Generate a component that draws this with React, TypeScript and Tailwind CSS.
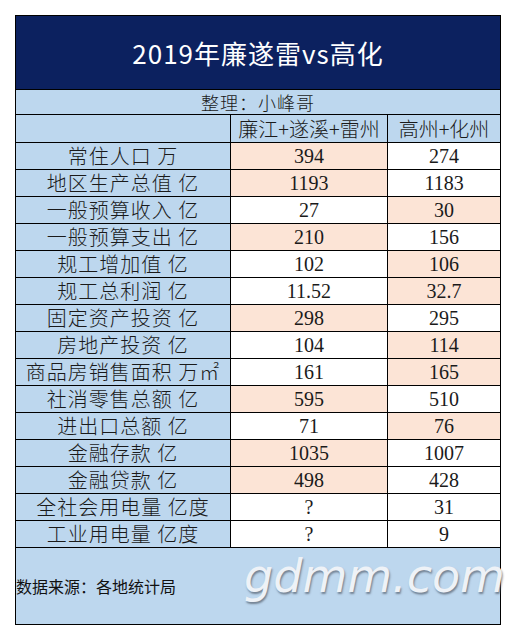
const rows: { label: string; a: string; b: string; hi: "a" | "b" | "" }[] = [
  { label: "常住人口 万", a: "394", b: "274", hi: "a" },
  { label: "地区生产总值 亿", a: "1193", b: "1183", hi: "a" },
  { label: "一般预算收入 亿", a: "27", b: "30", hi: "b" },
  { label: "一般预算支出 亿", a: "210", b: "156", hi: "a" },
  { label: "规工增加值 亿", a: "102", b: "106", hi: "b" },
  { label: "规工总利润 亿", a: "11.52", b: "32.7", hi: "b" },
  { label: "固定资产投资 亿", a: "298", b: "295", hi: "a" },
  { label: "房地产投资 亿", a: "104", b: "114", hi: "b" },
  { label: "商品房销售面积 万㎡", a: "161", b: "165", hi: "b" },
  { label: "社消零售总额 亿", a: "595", b: "510", hi: "a" },
  { label: "进出口总额 亿", a: "71", b: "76", hi: "b" },
  { label: "金融存款 亿", a: "1035", b: "1007", hi: "a" },
  { label: "金融贷款 亿", a: "498", b: "428", hi: "a" },
  { label: "全社会用电量 亿度", a: "?", b: "31", hi: "" },
  { label: "工业用电量 亿度", a: "?", b: "9", hi: "" },
];

const cjk = "font-['Noto_Sans_CJK_SC',sans-serif]";
const num = "font-['Liberation_Serif','Noto_Sans_CJK_SC',serif]";

export default function App() {
  return (
    <div className="w-[515px] h-[638px] bg-white pt-[15px] pl-[15px]">
      <table className="border-collapse table-fixed w-[485px] text-[#1a1a1a]">
        <colgroup>
          <col className="w-[215px]" />
          <col className="w-[157px]" />
          <col className="w-[113px]" />
        </colgroup>
        <tbody>
          {/* 标题 */}
          <tr>
            <td
              colSpan={3}
              className={`h-[74px] border border-black bg-[#0c215f] text-center text-white text-[26px] tracking-[1px] ${cjk}`}
            >
              2019年廉遂雷vs高化
            </td>
          </tr>
          <tr>
            <td
              colSpan={3}
              className={`h-[25px] border border-black bg-[#bdd7ee] text-center text-[18px] leading-none font-light tracking-[1px] ${cjk}`}
            >
              整理：小峰哥
            </td>
          </tr>
          <tr>
            <td className="h-[28px] border border-black bg-[#bdd7ee]" />
            <td className={`border border-black bg-[#bdd7ee] text-center text-[20px] leading-none font-light whitespace-nowrap ${cjk}`}>
              廉江+遂溪+雷州
            </td>
            <td className={`border border-black bg-[#bdd7ee] text-center text-[20px] leading-none font-light whitespace-nowrap ${cjk}`}>
              高州+化州
            </td>
          </tr>
          {rows.map((r) => (
            <tr key={r.label}>
              <td
                className={`h-[27px] border border-black bg-[#bdd7ee] text-center text-[20px] leading-none font-light tracking-[1px] whitespace-nowrap ${cjk}`}
              >
                {r.label}
              </td>
              <td
                className={`border border-black text-center text-[20px] leading-none ${num} ${
                  r.hi === "a" ? "bg-[#fce4d6]" : "bg-white"
                }`}
              >
                {r.a}
              </td>
              <td
                className={`border border-black text-center text-[20px] leading-none ${num} ${
                  r.hi === "b" ? "bg-[#fce4d6]" : "bg-white"
                }`}
              >
                {r.b}
              </td>
            </tr>
          ))}
          {/* 数据来源 + 水印 */}
          <tr>
            <td colSpan={3} className="h-[76px] border border-black bg-[#bdd7ee] p-0">
              <div className="relative h-[76px] flex items-center pt-[0px]">
                <span className={`text-[16px] leading-none text-[#111] ${cjk}`}>
                  数据来源：各地统计局
                </span>
                <span className="absolute left-[228px] top-[-6px] font-['DejaVu_Sans',sans-serif] italic font-normal text-[46px] tracking-[0px] text-[#eef2f7] [text-shadow:1px_2px_2px_rgba(90,100,115,0.75)]">
                  gdmm.com
                </span>
              </div>
            </td>
          </tr>
        </tbody>
      </table>
    </div>
  );
}
